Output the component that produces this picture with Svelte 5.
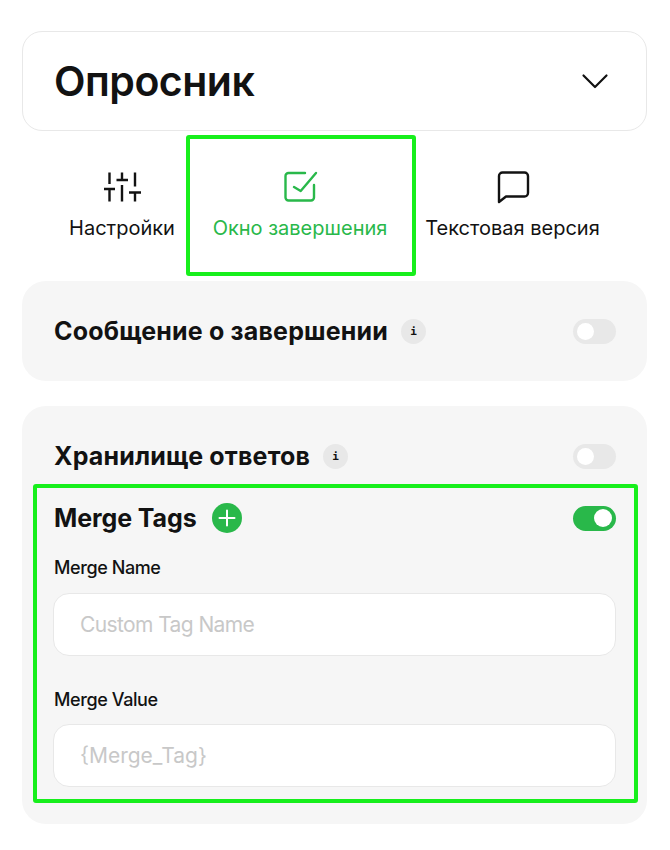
<script>
    const tabs = [
        { key: "settings", label: "Настройки" },
        { key: "finish", label: "Окно завершения", active: true },
        { key: "text", label: "Текстовая версия" }
    ];
</script>

<div class="page">
    <div class="header">
        <h1>Опросник</h1>
        <svg class="chevron" width="28" height="28" viewBox="0 0 28 28" fill="none" stroke="#111" stroke-width="2.2" stroke-linecap="round" stroke-linejoin="round">
            <path d="M2.5 8.5 14 20 25.5 8.5" />
        </svg>
    </div>

    <div class="tabs">
        {#each tabs as tab}
            <button class="tab {tab.key}" class:active={tab.active}>
                <svg width="38" height="38" viewBox="0 0 38 38" fill="none" stroke="currentColor" stroke-width="2.4" stroke-linecap="round" stroke-linejoin="round">
                    {#if tab.key === "settings"}
                        <path stroke-linecap="butt" d="M6.5 3.500v11.500M6.500 20v12.500M1 20h11M19 3.500v8M19 16v16.500M13.500 11h11.500M32 3.500v14M32 23.500v9M26 23.500h12" />
                    {:else if tab.key === "finish"}
                        <path d="M33 16v12.500a3 3 0 0 1-3 3H7.500a3 3 0 0 1-3-3V7a3 3 0 0 1 3-3H24" />
                        <path d="M13 18l6.700 4L35 4" />
                    {:else}
                        <path d="M5 33V7a3.500 3.500 0 0 1 3.500-3.500h22A3.500 3.500 0 0 1 34 7v17a3.500 3.500 0 0 1-3.500 3.500H12z" />
                    {/if}
                </svg>
                <span>{tab.label}</span>
            </button>
        {/each}
    </div>

    <section class="card first">
        <div class="row">
            <h2>Сообщение о завершении</h2>
            <span class="info">i</span>
            <span class="toggle"></span>
        </div>
    </section>

    <section class="card second">
        <div class="row">
            <h2>Хранилище ответов</h2>
            <span class="info">i</span>
            <span class="toggle"></span>
        </div>

        <div class="merge">
            <div class="row merge-head">
                <h2 class="latin">Merge Tags</h2>
                <span class="plus">
                    <svg width="18" height="18" viewBox="0 0 18 18" stroke="#fff" stroke-width="2" stroke-linecap="round">
                        <path d="M9 1.500v15M1.500 9h15" />
                    </svg>
                </span>
                <span class="toggle on"></span>
            </div>

            <label class="name">
                <span>Merge Name</span>
                <input placeholder="Custom Tag Name" />
            </label>
            <label class="value">
                <span>Merge Value</span>
                <input placeholder={"{Merge_Tag}"} />
            </label>
        </div>
    </section>
</div>

<style>
    :global(body) {
        background: #fff;
        font-family: Inter, "Liberation Sans", sans-serif;
        color: #121212;
    }
    .page {
        width: 670px;
        box-sizing: border-box;
        padding: 31px 23px 0 22px;
    }
    .header {
        box-sizing: border-box;
        height: 100px;
        border: 1px solid #e8e8e8;
        border-radius: 20px;
        display: flex;
        align-items: center;
        justify-content: space-between;
        padding: 0 37px 0 31px;
    }
    h1 {
        margin: 0;
        font-size: 41px;
        font-weight: 600;
        letter-spacing: -0.5px;
    }
    .tabs {
        display: flex;
        height: 141px;
        margin: 4px 0 5px;
    }
    .tab {
        appearance: none;
        background: transparent;
        border: 4px solid transparent;
        border-radius: 3px;
        font-family: inherit;
        color: #121212;
        display: flex;
        flex-direction: column;
        align-items: center;
        box-sizing: border-box;
        padding: 30px 0 0;
        gap: 7px;
        font-size: 20px;
        letter-spacing: 0;
        white-space: nowrap;
    }
    .tab span {
        line-height: 28px;
    }
    .settings {
        width: 164px;
        padding-left: 36px;
    }
    .finish {
        width: 230px;
        padding-right: 2px;
    }
    .text {
        width: 193px;
    }
    .tab.active {
        border-color: #17ef1c;
        color: #29b84a;
    }
    .card {
        background: #f6f6f6;
        border-radius: 24px;
        box-sizing: border-box;
    }
    .first {
        height: 100px;
        padding: 0 31px;
        display: flex;
        align-items: center;
    }
    .first .row {
        width: 100%;
    }
    .second {
        height: 418px;
        margin-top: 25px;
        padding: 35px 9px 0 11px;
    }
    .second > .row {
        padding: 0 22px 0 20px;
    }
    .row {
        display: flex;
        align-items: center;
    }
    h2 {
        margin: 0;
        padding-left: 1px;
        font-size: 25px;
        font-weight: 700;
        line-height: 30px;
        letter-spacing: 0.18px;
    }
    h2.latin {
        letter-spacing: -0.1px;
    }
    .info {
        width: 25px;
        height: 25px;
        border-radius: 50%;
        background: #e8e8e8;
        margin-left: 13px;
        display: flex;
        align-items: center;
        justify-content: center;
        font-family: "DejaVu Sans Mono", monospace;
        font-size: 11px;
        font-weight: 700;
    }
    .toggle {
        position: relative;
        width: 43px;
        height: 25px;
        border-radius: 13px;
        background: #e8e8e8;
        margin-left: auto;
    }
    .toggle::after {
        content: "";
        position: absolute;
        top: 4px;
        left: 4px;
        width: 17px;
        height: 17px;
        border-radius: 50%;
        background: #fff;
    }
    .toggle.on {
        background: #29b84a;
    }
    .toggle.on::after {
        left: 21px;
        width: 18px;
        height: 18px;
        top: 3.500px;
    }
    .merge {
        box-sizing: border-box;
        height: 319px;
        margin-top: 13px;
        border: 4px solid #17ef1c;
        border-radius: 3px;
        padding: 15px 18px 0 16px;
    }
    .plus {
        width: 30px;
        height: 30px;
        border-radius: 50%;
        background: #29b84a;
        margin-left: 15px;
        display: flex;
        align-items: center;
        justify-content: center;
    }
    label {
        display: block;
    }
    label span {
        display: block;
        padding-left: 1px;
        font-size: 18px;
        font-weight: 500;
        line-height: 24px;
        letter-spacing: -0.4px;
    }
    .name {
        margin-top: 23px;
    }
    .value {
        margin-top: 32px;
    }
    input {
        display: block;
        box-sizing: border-box;
        width: 100%;
        height: 63px;
        margin-top: 13px;
        border: 1px solid #e8e8e8;
        border-radius: 16px;
        background: #fff;
        padding: 0 26px;
        font-family: inherit;
        font-size: 21px;
        letter-spacing: -0.6px;
        outline: none;
    }
    .value input {
        margin-top: 12px;
        letter-spacing: 0;
    }
    input::placeholder {
        color: #c8c8c8;
        opacity: 1;
    }
</style>
